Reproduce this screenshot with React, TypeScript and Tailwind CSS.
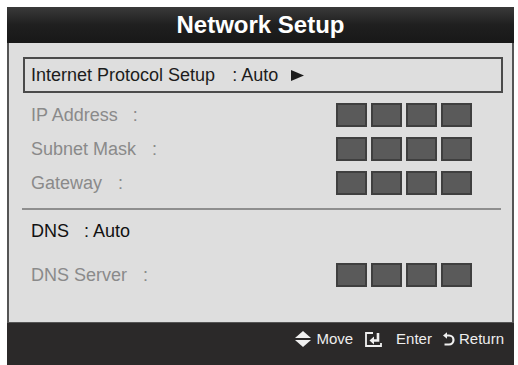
import React from "react";

const font = { fontFamily: '"Liberation Sans", Arial, sans-serif' };

function Blocks() {
  return (
    <div className="flex gap-[4px]">
      {[0, 1, 2, 3].map((i) => (
        <div
          key={i}
          className="w-[31px] h-[24px] bg-[#5a5a5a] border-2 border-[#3f3f3f]"
        />
      ))}
    </div>
  );
}

function AddressRow({ label, colonGap }: { label: string; colonGap: string }) {
  return (
    <div className="h-[34px] flex items-center justify-between ml-[22px] mr-[40px]">
      <div className="flex items-center text-[18px] text-[#8a8a8a]">
        <span>{label}</span>
        <span className={colonGap}>:</span>
      </div>
      <Blocks />
    </div>
  );
}

function MoveIcon() {
  return (
    <svg width="16" height="16" viewBox="0 0 16 16" className="text-[#f0f0f0]">
      <polygon points="0,7 8,0 16,7" fill="currentColor" />
      <polygon points="0,9 8,16 16,9" fill="currentColor" />
    </svg>
  );
}

function EnterIcon() {
  return (
    <svg width="17" height="15" viewBox="0 0 17 15" className="text-[#f0f0f0]">
      <path d="M8 1 H1 V14 H16 V11" fill="none" stroke="currentColor" strokeWidth="1.8" />
      <path d="M13 1 V8.5 H8" fill="none" stroke="currentColor" strokeWidth="2.6" />
      <polygon points="4.5,8.5 9,4.5 9,12.5" fill="currentColor" />
    </svg>
  );
}

function ReturnIcon() {
  return (
    <svg width="12" height="15" viewBox="0 0 12 15" className="text-[#f0f0f0]">
      <path
        d="M3 3.5 H6 A4.5 4.5 0 0 1 6 12.5 H1.5"
        fill="none"
        stroke="currentColor"
        strokeWidth="2.2"
      />
      <polygon points="0,3.5 4,0.3 4,6.7" fill="currentColor" />
    </svg>
  );
}

export default function App() {
  return (
    <div className="w-[518px] h-[365px] bg-white overflow-hidden pt-[7px] pl-[7px]" style={font}>
      <div className="w-[507px] h-[358px] flex flex-col">
        <div className="h-[36px] flex items-center justify-center bg-gradient-to-b from-[#3a3a3a] via-[#1f1f1f] to-[#181818]">
          <span className="text-[24px] font-bold text-white leading-none">Network Setup</span>
        </div>

        <div className="h-[280px] bg-[#dedede] border-x-2 border-b border-[#555] flex flex-col">
          <div className="mt-[14px] ml-[14px] mr-[9px] h-[36px] border-2 border-[#4a4a4a] flex items-center pl-[6px] text-[18px] text-[#1c1c1c]">
            <span>Internet Protocol Setup</span>
            <span className="ml-[17px]">: Auto</span>
            <svg width="13" height="11" viewBox="0 0 13 11" className="ml-[13px] text-[#1c1c1c]">
              <polygon points="0,0 13,5.5 0,11" fill="currentColor" />
            </svg>
          </div>

          <div className="mt-[5px]">
            <AddressRow label="IP Address" colonGap="ml-[15px]" />
            <AddressRow label="Subnet Mask" colonGap="ml-[16px]" />
            <AddressRow label="Gateway" colonGap="ml-[16px]" />
          </div>

          <div className="mt-[8px] ml-[13px] mr-[11px] h-[2px] bg-[#8e8e8e]" />

          <div className="mt-[4px] h-[34px] flex items-center ml-[22px] text-[18px] text-[#111]">
            <span>DNS</span>
            <span className="ml-[15px]">: Auto</span>
          </div>

          <div className="mt-[10px]">
            <AddressRow label="DNS Server" colonGap="ml-[16px]" />
          </div>
        </div>

        <div className="flex-1 bg-[#2b2929] flex items-start justify-end pt-[7px] pr-[10px] text-[15px] text-[#eeeeee] leading-[18px]">
          <div className="flex items-center">
            <MoveIcon />
            <span className="ml-[5px]">Move</span>
            <span className="ml-[12px] flex"><EnterIcon /></span>
            <span className="ml-[14px]">Enter</span>
            <span className="ml-[11px] flex"><ReturnIcon /></span>
            <span className="ml-[4px]">Return</span>
          </div>
        </div>
      </div>
    </div>
  );
}
